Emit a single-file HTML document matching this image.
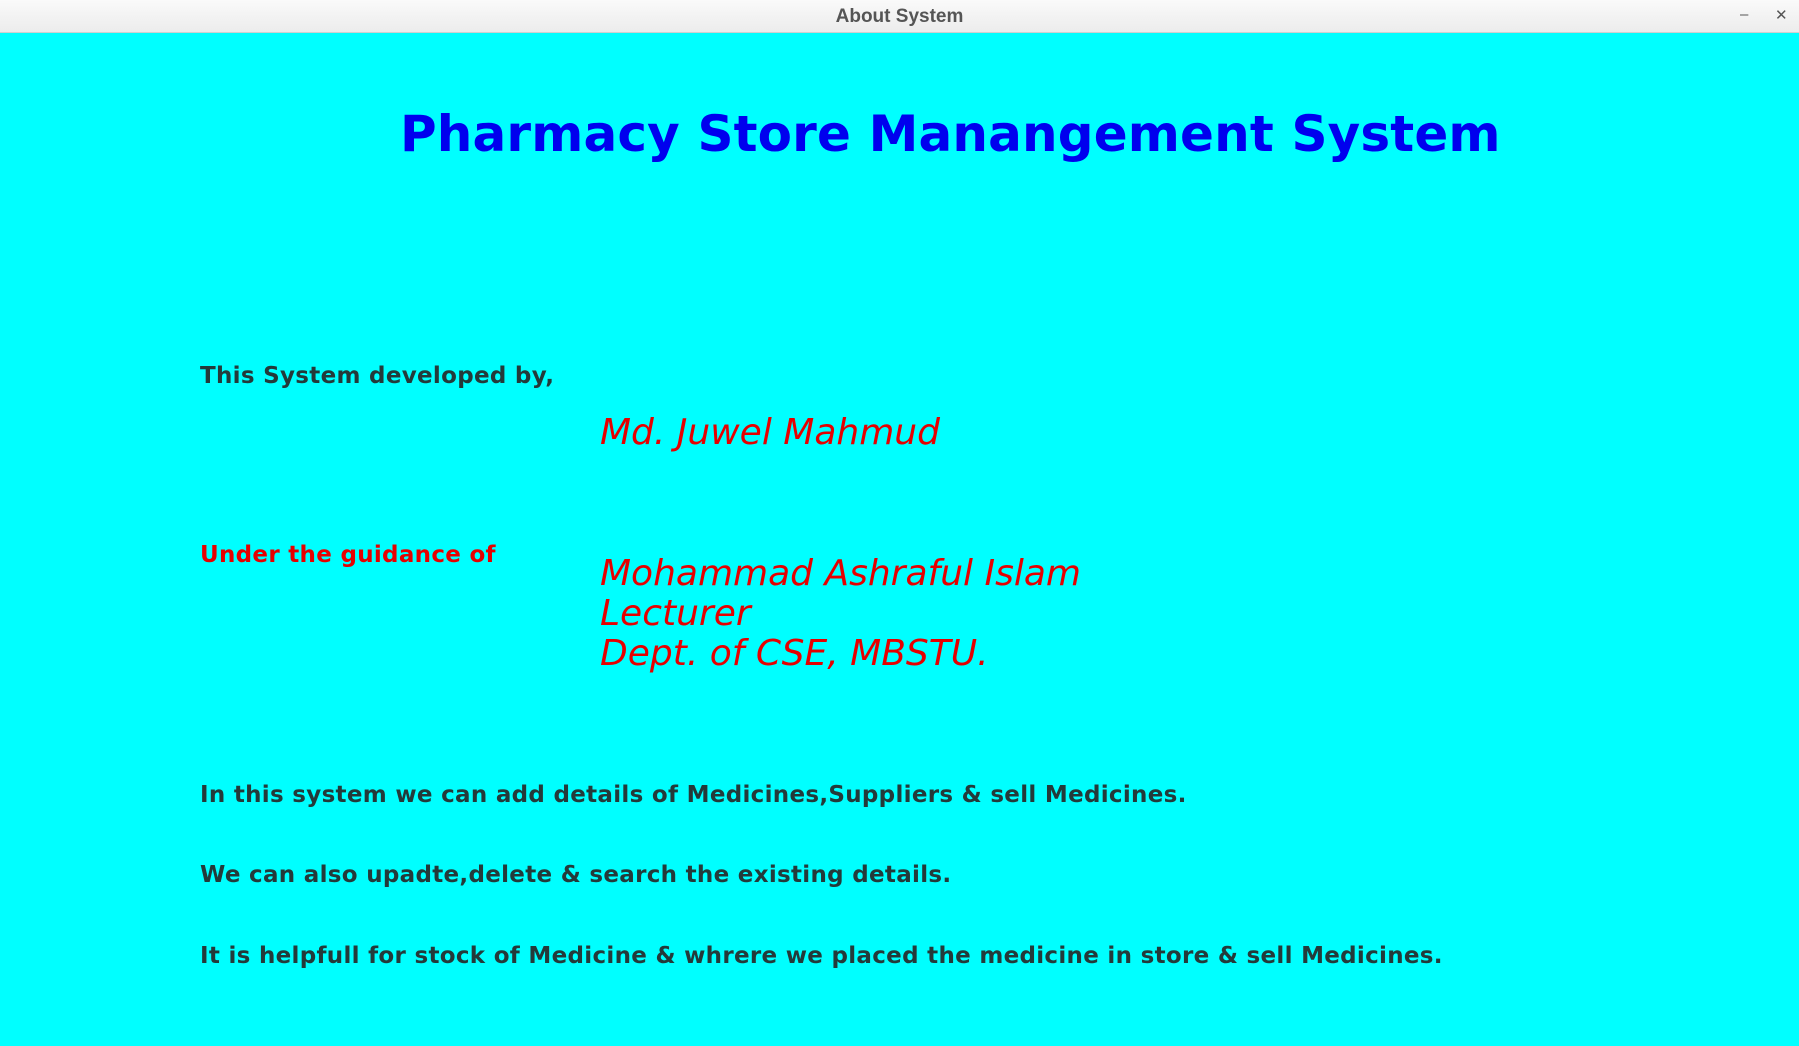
<!DOCTYPE html>
<html><head><meta charset="utf-8"><style>
html,body{margin:0;padding:0;width:1799px;height:1046px;overflow:hidden;background:#00ffff;font-family:"DejaVu Sans","Liberation Sans",sans-serif}
.bar{position:absolute;left:0;top:0;width:1799px;height:32px;background:linear-gradient(#fafafa,#ececec);border-bottom:1px solid #d0d0d0}
.bar .t{position:absolute;left:0;width:1799px;top:6px;text-align:center;font-size:19px;color:#555;font-family:"Liberation Sans",sans-serif;font-weight:bold}
.bar .b{position:absolute;top:6px;font-size:15px;color:#555;font-family:"Liberation Sans",sans-serif}
.a{position:absolute;line-height:1;white-space:nowrap}
.h{font-size:50px;font-weight:bold;color:#0000ee;letter-spacing:0.15px}
.s{font-size:23px;font-weight:bold;color:#243a3a;letter-spacing:0.3px}
.r{font-size:23px;font-weight:bold;color:#e60000;letter-spacing:0.3px}
.i{font-size:36px;font-style:oblique;color:#e60000}
</style></head><body>
<div class="bar"><div class="t">About System</div><span class="b" style="left:1740px">–</span><span class="b" style="left:1775px">✕</span></div>
<div class="a h" style="left:400px;top:109px">Pharmacy Store Manangement System</div>
<div class="a s" style="left:200px;top:365px">This System developed by,</div>
<div class="a i" style="left:600px;top:415px">Md. Juwel Mahmud</div>
<div class="a r" style="left:200px;top:544px">Under the guidance of</div>
<div class="a i" style="left:600px;top:556px">Mohammad Ashraful Islam</div>
<div class="a i" style="left:600px;top:596px">Lecturer</div>
<div class="a i" style="left:600px;top:636px">Dept. of CSE, MBSTU.</div>
<div class="a s" style="left:200px;top:784px">In this system we can add details of Medicines,Suppliers &amp; sell Medicines.</div>
<div class="a s" style="left:200px;top:864px">We can also upadte,delete &amp; search the existing details.</div>
<div class="a s" style="left:200px;top:945px">It is helpfull for stock of Medicine &amp; whrere we placed the medicine in store &amp; sell Medicines.</div>
</body></html>
